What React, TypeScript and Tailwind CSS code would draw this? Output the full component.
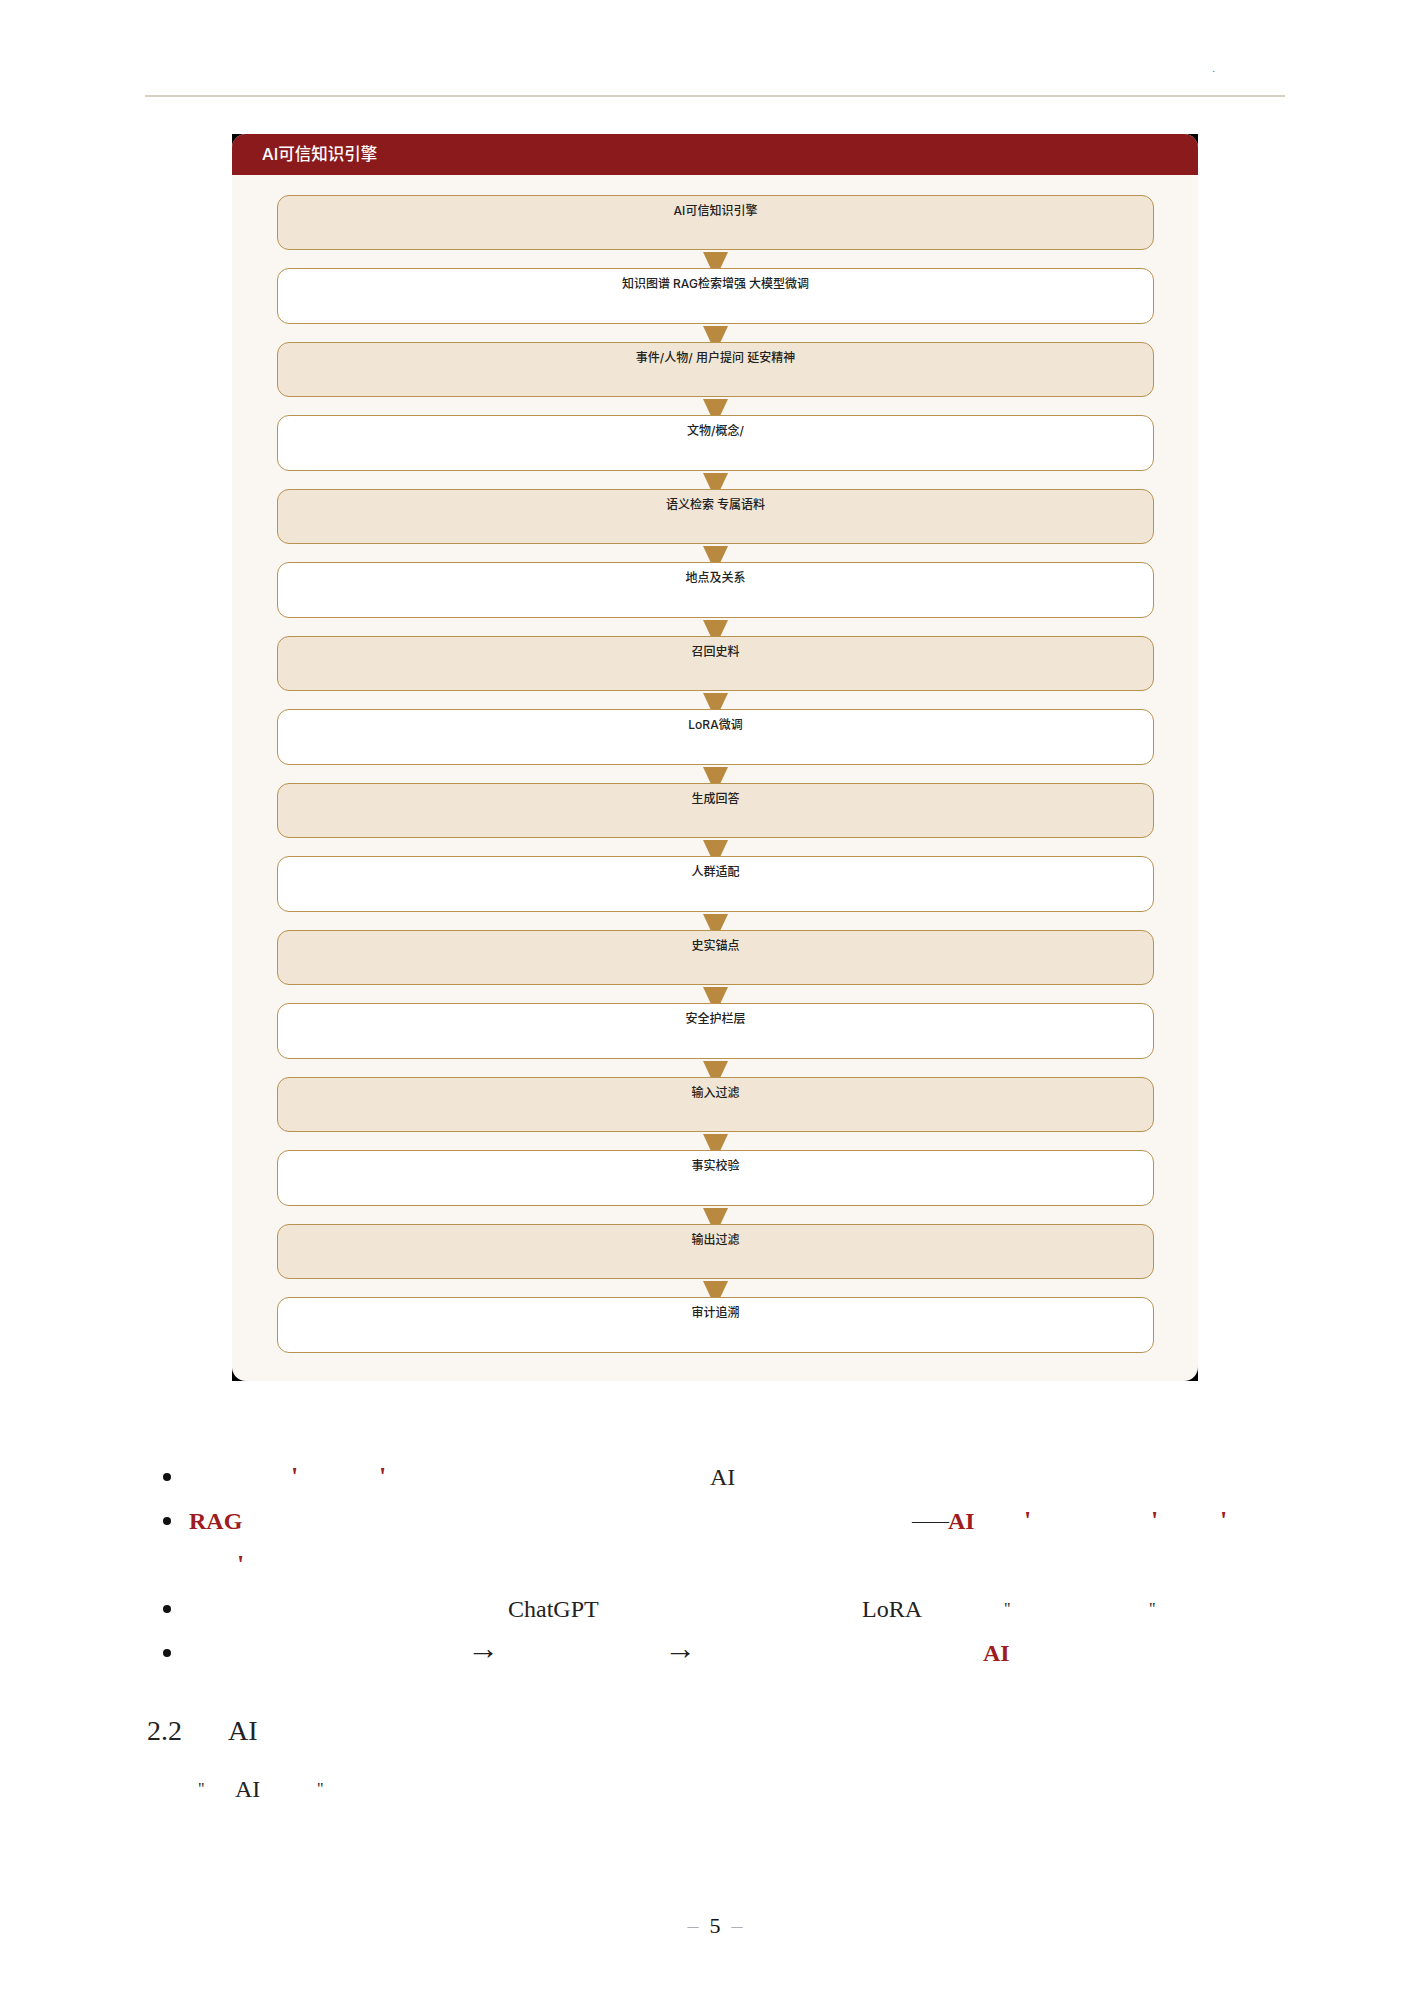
import React from "react";

const steps = [
  "AI可信知识引擎",
  "知识图谱 RAG检索增强 大模型微调",
  "事件/人物/ 用户提问 延安精神",
  "文物/概念/",
  "语义检索 专属语料",
  "地点及关系",
  "召回史料",
  "LoRA微调",
  "生成回答",
  "人群适配",
  "史实锚点",
  "安全护栏层",
  "输入过滤",
  "事实校验",
  "输出过滤",
  "审计追溯",
];

const serif = { fontFamily: '"Liberation Serif", "Times New Roman", serif' };
const sans = { fontFamily: 'Inter, "Noto Sans CJK SC", sans-serif' };

function Arrow() {
  return (
    <div className="h-[18px] flex justify-center pt-[2px]">
      <svg width="25" height="16" viewBox="0 0 25 16">
        <polygon points="0,0 25,0 17.5,16 7.5,16" fill="#b8893e" />
      </svg>
    </div>
  );
}

function Bullet({ children }: { children: React.ReactNode }) {
  return (
    <div className="flex items-center h-[44px]">
      <span className="inline-block w-[8px] h-[8px] rounded-full bg-[#111] ml-[18px] mr-[18px]" />
      <div className="flex items-center whitespace-nowrap">{children}</div>
    </div>
  );
}

// red bold apostrophe used around terms
const Q = () => <span className="font-bold text-[26px] leading-none text-[#9e1b1e]">'</span>;

export default function App() {
  return (
    <div className="min-h-[2000px] bg-white text-[#222]">
      <div className="w-[1140px] ml-[145px]">
        {/* page header */}
        <div className="h-[95px] flex items-end justify-end pr-[70px] pb-[21px]">
          <span className="text-[10px] text-[#555] leading-none" style={serif}>.</span>
        </div>
        <div className="h-[1.5px] bg-[#d8cec1]" />

        {/* flow chart card */}
        <div className="mt-[37px] w-[966px] mx-auto bg-black">
          <div className="rounded-[14px] overflow-hidden bg-[#faf7f2]">
            <div className="h-[41px] bg-[#8a1a1c] pl-[30px] flex items-center">
              <span className="text-white text-[16.5px] font-medium" style={sans}>AI可信知识引擎</span>
            </div>
            <div className="pt-[20px] pb-[28px] pl-[45px] pr-[44px]">
              {steps.map((s, i) => (
                <div key={i}>
                  {i > 0 && <Arrow />}
                  <div
                    className={`h-[55.5px] rounded-[12px] border-[1.5px] border-[#b8924f] pt-[7px] text-center text-[12px] leading-[16px] font-medium text-[#222] ${
                      i % 2 === 0 ? "bg-[#f1e6d5]" : "bg-white"
                    }`}
                    style={sans}
                  >
                    {s}
                  </div>
                </div>
              ))}
            </div>
          </div>
        </div>

        {/* bullet list */}
        <div className="mt-[74px] text-[24px]" style={serif}>
          <Bullet>
            <span className="inline-block w-[102px]" />
            <span className="inline-block w-[88px]"><Q /></span>
            <span className="inline-block w-[331px]"><Q /></span>
            <span>AI</span>
          </Bullet>
          <Bullet>
            <span className="inline-block w-[723px] font-bold text-[#9e1b1e]">RAG</span>
            <span className="inline-block w-[36px] tracking-[-3px] text-[20px]">——</span>
            <span className="inline-block w-[76px] font-bold text-[#9e1b1e]">AI</span>
            <span className="inline-block w-[127px]"><Q /></span>
            <span className="inline-block w-[69px]"><Q /></span>
            <Q />
          </Bullet>
          <div className="flex items-center h-[44px] pl-[44px] whitespace-nowrap">
            <span className="inline-block w-[48px]" />
            <Q />
          </div>
          <Bullet>
            <span className="inline-block w-[319px]" />
            <span className="inline-block w-[354px]">ChatGPT</span>
            <span className="inline-block w-[142px]">LoRA</span>
            <span className="inline-block w-[145px] text-[16px] text-[#222]">"</span>
            <span className="text-[16px] text-[#222]">"</span>
          </Bullet>
          <Bullet>
            <span className="inline-block w-[278px]" />
            <span className="inline-block w-[197px] text-[32px] leading-none -translate-y-[5px]">→</span>
            <span className="inline-block w-[319px] text-[32px] leading-none -translate-y-[5px]">→</span>
            <span className="font-bold text-[#9e1b1e]">AI</span>
          </Bullet>
        </div>

        {/* section heading */}
        <div className="mt-[34px] h-[44px] flex items-center text-[28px] whitespace-nowrap" style={serif}>
          <span className="inline-block w-[83px] pl-[2px]">2.2</span>
          <span>AI</span>
        </div>
        <div className="mt-[14px] h-[44px] flex items-center text-[24px] whitespace-nowrap pl-[53px]" style={serif}>
          <span className="inline-block w-[37px] text-[16px] text-[#222]">"</span>
          <span className="inline-block w-[82px]">AI</span>
          <span className="text-[16px] text-[#222]">"</span>
        </div>

        {/* page number */}
        <div className="mt-[100px] h-[30px] flex items-center justify-center gap-[11px] text-[22px]" style={serif}>
          <span className="text-[#b0b0b0]">–</span>
          <span className="text-[#111]">5</span>
          <span className="text-[#b0b0b0]">–</span>
        </div>
      </div>
    </div>
  );
}
